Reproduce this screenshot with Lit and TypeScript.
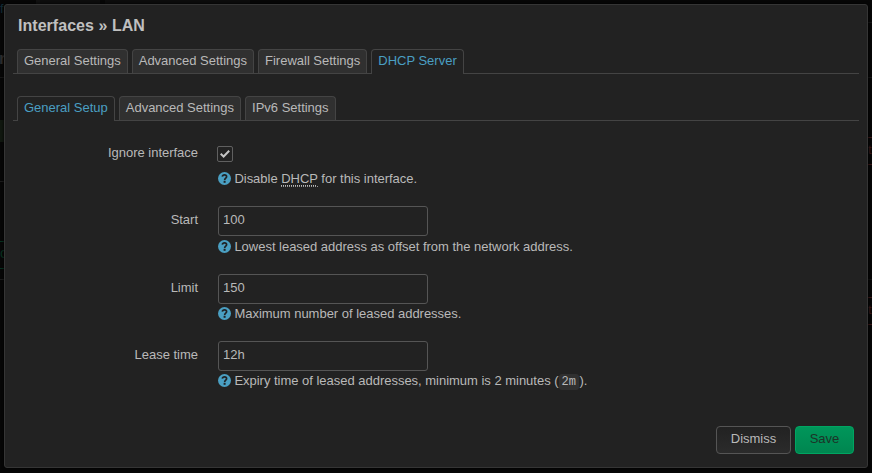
import { LitElement, html, css, svg } from "lit";
import { customElement } from "lit/decorators.js";

const helpIcon = html`<svg class="help" viewBox="0 0 13 13" width="13" height="13">
  <circle cx="6.5" cy="6.5" r="6.5" fill="#4a9fc2" />
  <path d="M4.3 4.7C4.6 2.2 8.6 2.3 8.6 4.7C8.6 6.2 6.6 6.2 6.6 8.2" fill="none" stroke="#202326" stroke-width="1.7" />
  <rect x="5.6" y="9" width="2" height="1.8" fill="#202326" />
</svg>`;

const tabs = (labels: string[], active: string) => html`
  <nav class="tabs">
    ${labels.map((t) => html`<a class=${t === active ? "tab active" : "tab"}>${t}</a>`)}
  </nav>
`;

const field = (cls: string, label: string, value: string, hint: unknown) => html`
  <div class="row ${cls}">
    <label class="label">${label}</label>
    <div class="control">
      <div class="input">${value}</div>
      <div class="hint">${helpIcon}<span>${hint}</span></div>
    </div>
  </div>
`;

@customElement("app-root")
export class AppRoot extends LitElement {
  static styles = css`
    :host {
      display: block;
      position: relative;
      box-sizing: border-box;
      width: 872px;
      height: 473px;
      padding: 4px;
      overflow: hidden;
      background: #060606;
      color: #b9b9b9;
      font: 13px/18px "Liberation Sans", Arial, sans-serif;
      letter-spacing: -0.018px;
    }
    .backdrop {
      position: absolute;
      left: 0;
      top: 0;
    }
    .modal {
      position: relative;
      box-sizing: border-box;
      height: 464px;
      padding: 0 8px;
      border: 1px solid #353535;
      border-radius: 3px;
      background: #222;
      box-shadow: 0 0 3px #000;
      display: flex;
      flex-direction: column;
    }
    h4 {
      margin: 11px 0 14px 5px;
      font-size: 16px;
      line-height: 19px;
      font-weight: bold;
      letter-spacing: 0.04px;
      color: #c0c0c0;
    }
    .tabs {
      display: flex;
      flex: none;
      gap: 4px;
      height: 25px;
      padding-left: 4px;
      box-sizing: border-box;
      border-bottom: 1px solid #444;
      letter-spacing: -0.007px;
    }
    .tabs + .tabs {
      margin-top: 22px;
    }
    .tab {
      box-sizing: border-box;
      height: 24px;
      padding: 2px 6px 0;
      border: 1px solid #444;
      border-bottom: 0;
      border-radius: 4px 4px 0 0;
      background: #303030;
      white-space: nowrap;
    }
    .tab.active {
      height: 25px;
      background: #222;
      color: #4a9fc2;
    }
    .row {
      display: flex;
      gap: 20px;
      height: 67px;
    }
    .row.ignore {
      height: 60px;
      margin-top: 25px;
    }
    .row.start {
      height: 68px;
    }
    .label {
      width: 185px;
      padding-top: 5px;
      text-align: right;
    }
    .ignore .label {
      padding-top: 0;
      margin-top: -2px;
    }
    .input {
      box-sizing: border-box;
      width: 210px;
      height: 30px;
      padding: 4px;
      border: 1px solid #555;
      border-radius: 3px;
    }
    .check {
      display: block;
      margin-left: -1px;
    }
    .hint {
      display: flex;
      align-items: flex-start;
      gap: 3.4px;
      height: 18px;
      margin-top: 2px;
      white-space: nowrap;
    }
    .limit .hint,
    .lease .hint {
      margin-top: 1px;
    }
    .ignore .hint {
      margin-top: 8px;
    }
    .help {
      display: block;
      margin-top: 2px;
    }
    .abbr {
      border-bottom: 1px dotted #999;
      text-decoration: underline dotted 1px;
      text-underline-offset: 2px;
      text-decoration-skip-ink: none;
    }
    .code {
      display: inline-block;
      box-sizing: border-box;
      height: 16px;
      padding: 0 3px;
      margin: 0 0.5px 0 0;
      border-radius: 3px;
      background: #303030;
      font: 12px/16px "Liberation Mono", monospace;
    }
    .actions {
      display: flex;
      justify-content: flex-end;
      gap: 4px;
      margin-top: auto;
      padding: 0 5px 13px 0;
    }
    .btn {
      box-sizing: border-box;
      height: 28px;
      padding: 3px 0;
      border: 1px solid #555;
      border-radius: 4px;
      background: linear-gradient(#222, #2b2b2b);
      text-align: center;
      width: 75px;
    }
    .btn.save {
      width: 59px;
      border-color: #00a562;
      background: linear-gradient(#00965a, #008650);
      color: #1c3328;
    }
  `;

  render() {
    return html`
      <svg class="backdrop" width="872" height="473">
        ${svg`
          <rect x="36" y="0" width="4" height="4" fill="#101010" />
          <rect x="40" y="0" width="60" height="4" fill="#0d0d0d" />
          <rect x="105" y="0" width="145" height="4" fill="#0c0c0c" />
          <text x="0" y="13" font-size="13" fill="#122c36">fa</text>
          <text x="-1" y="64" font-size="17" font-weight="bold" fill="#2c2c2c">r</text>
          <rect x="0" y="77" width="4" height="1" fill="#161616" />
          <rect x="0" y="120" width="4" height="22" fill="#10170f" />
          <rect x="0" y="181" width="4" height="1" fill="#1b1b1b" />
          <rect x="0" y="241" width="4" height="1" fill="#06301f" />
          <text x="0" y="258" font-size="14" fill="#06301f">c</text>
          <rect x="0" y="268" width="4" height="1" fill="#06301f" />
          <rect x="0" y="279" width="4" height="1" fill="#1b1b1b" />
          <rect x="868" y="22" width="4" height="1" fill="#151515" />
          <rect x="868" y="77" width="4" height="1" fill="#151515" />
          <rect x="868" y="137" width="4" height="1" fill="#381717" />
          <text x="868" y="154" font-size="13" fill="#381717">t</text>
          <rect x="868" y="164" width="4" height="1" fill="#381717" />
          <rect x="868" y="279" width="4" height="1" fill="#111" />
          <rect x="868" y="297" width="4" height="1" fill="#381717" />
          <text x="868" y="314" font-size="13" fill="#381717">t</text>
          <rect x="868" y="324" width="4" height="1" fill="#381717" />
        `}
      </svg>
      <section class="modal">
        <h4>Interfaces » LAN</h4>
        ${tabs(["General Settings", "Advanced Settings", "Firewall Settings", "DHCP Server"], "DHCP Server")}
        ${tabs(["General Setup", "Advanced Settings", "IPv6 Settings"], "General Setup")}
        <div class="row ignore">
          <label class="label">Ignore interface</label>
          <div class="control">
            <svg class="check" width="16" height="16" viewBox="0 0 16 16">
              <rect x=".5" y=".5" width="15" height="15" rx="1.5" fill="#222" stroke="#606060" />
              <path d="M3.7 7.8L6.6 10.5L12.2 4.8" fill="none" stroke="#c4c4c4" stroke-width="2" />
            </svg>
            <div class="hint">${helpIcon}<span>Disable <span class="abbr">DHCP</span> for this interface.</span></div>
          </div>
        </div>
        ${field("start", "Start", "100", "Lowest leased address as offset from the network address.")}
        ${field("limit", "Limit", "150", "Maximum number of leased addresses.")}
        ${field("lease", "Lease time", "12h", html`Expiry time of leased addresses, minimum is 2 minutes (<span class="code">2m</span>).`)}
        <div class="actions">
          <div class="btn">Dismiss</div>
          <div class="btn save">Save</div>
        </div>
      </section>
    `;
  }
}
